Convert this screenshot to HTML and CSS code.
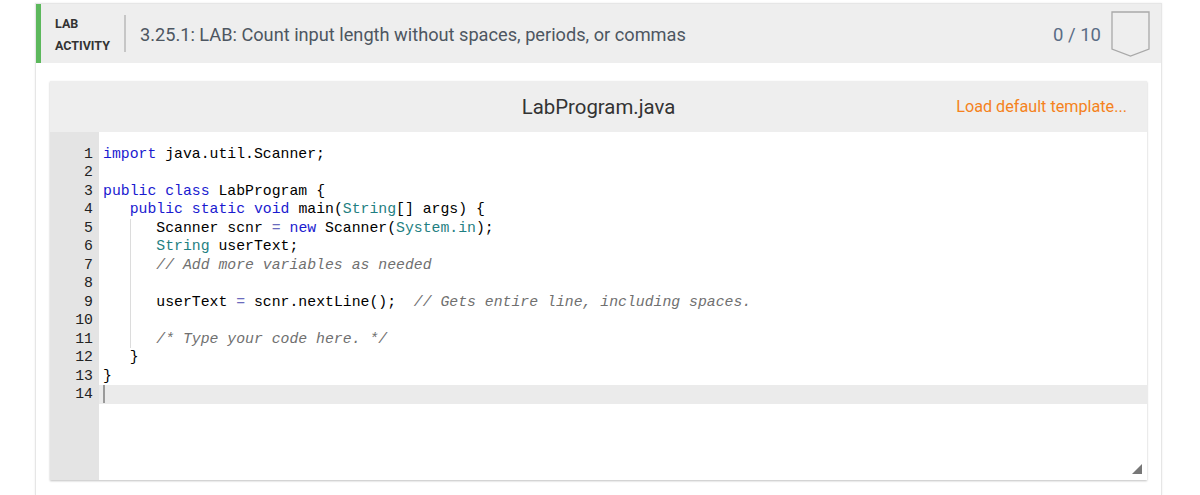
FILE: index.html
```html
<!DOCTYPE html>
<html lang="en">
<head>
    <meta charset="UTF-8">
    <title>LAB ACTIVITY 3.25.1</title>
    <link rel="stylesheet" href="styles.css">
</head>
<body>
    <div class="activity">
        <div class="activity-header">
            <div class="activity-label">LAB<br>ACTIVITY</div>
            <div class="activity-title">3.25.1: LAB: Count input length without spaces, periods, or commas</div>
            <div class="score">0 / 10</div>
            <svg class="badge" width="40" height="48" viewBox="0 0 40 48">
                <path d="M1 1 H38 V38 L19.5 45 L1 38 Z" fill="none" stroke="#a9a9a9" stroke-width="1.3"/>
            </svg>
        </div>

        <div class="activity-body">
            <div class="editor">
                <div class="editor-header">
                    <div class="file-name">LabProgram.java</div>
                    <a class="load-template" href="#">Load default template...</a>
                </div>
                <div class="editor-main">
                    <div class="gutter">
                        <div>1</div><div>2</div><div>3</div><div>4</div><div>5</div>
                        <div>6</div><div>7</div><div>8</div><div>9</div><div>10</div>
                        <div>11</div><div>12</div><div>13</div><div>14</div>
                    </div>
                    <div class="code">
                        <div class="line"><span class="kw">import</span> java.util.Scanner;</div>
                        <div class="line"></div>
                        <div class="line"><span class="kw">public</span> <span class="kw">class</span> LabProgram {</div>
                        <div class="line">   <span class="kw">public</span> <span class="kw">static</span> <span class="kw">void</span> main(<span class="type">String</span>[] args) {</div>
                        <div class="line guide">      Scanner scnr <span class="op">=</span> <span class="kw">new</span> Scanner(<span class="type">System.in</span>);</div>
                        <div class="line guide">      <span class="type">String</span> userText;</div>
                        <div class="line guide">      <span class="cm">// Add more variables as needed</span></div>
                        <div class="line guide"></div>
                        <div class="line guide">      userText <span class="op">=</span> scnr.nextLine();  <span class="cm">// Gets entire line, including spaces.</span></div>
                        <div class="line guide"></div>
                        <div class="line guide">      <span class="cm">/* Type your code here. */</span></div>
                        <div class="line">   }</div>
                        <div class="line">}</div>
                        <div class="line current"><span class="cursor"></span></div>
                    </div>
                    <svg class="resize" width="10" height="10" viewBox="0 0 10 10">
                        <path d="M10 0 L10 10 L0 10 Z" fill="#777"/>
                    </svg>
                </div>
            </div>
        </div>
    </div>
</body>
</html>
```

FILE: styles.css
```css
* {
    box-sizing: border-box;
    margin: 0;
    padding: 0;
}

body {
    background-color: white;
    font-family: Roboto, "Liberation Sans", sans-serif;
    padding: 3px 38px 0 35px;
}

.activity {
    border: 1px solid #e6e6e6;
    border-bottom: none;
    box-shadow: 0 0 2px rgba(0, 0, 0, 0.08);
    height: 492px;
}

.activity-header {
    display: flex;
    align-items: center;
    height: 59px;
    background-color: #eeeeee;
    border-left: 5px solid #5cb85c;
    padding: 0 10px 0 14px;
}

.activity-label {
    font-size: 12.5px;
    font-weight: 700;
    color: #333;
    padding-top: 2px;
    padding-right: 14px;
    border-right: 2px solid #c6c6c6;
    height: 37px;
    display: flex;
    align-items: center;
    line-height: 22px;
}

.activity-title {
    flex: 1;
    font-size: 18.2px;
    color: #4d5661;
    padding-left: 14px;
    padding-top: 2px;
}

.score {
    font-size: 18.5px;
    color: #5a6c85;
    margin-right: 10px;
    padding-top: 2px;
}

.badge {
    display: block;
    margin-top: 3px;
}

.activity-body {
    padding: 18px 14px 0 14px;
}

.editor {
    box-shadow: 0 1px 2px rgba(0, 0, 0, 0.25);
}

.editor-header {
    position: relative;
    height: 51px;
    background-color: #eeeeee;
    display: flex;
    align-items: center;
    justify-content: center;
}

.file-name {
    font-size: 20.4px;
    color: #333;
    padding-top: 1px;
}

.load-template {
    position: absolute;
    right: 20px;
    top: 16px;
    font-size: 16.2px;
    color: #f58220;
    text-decoration: none;
}

.editor-main {
    position: relative;
    display: flex;
    height: 348px;
    background-color: white;
}

.gutter {
    width: 49px;
    background-color: #e4e4e4;
    padding: 12.5px 6px 0 0;
    text-align: right;
    font-family: "Liberation Mono", monospace;
    font-size: 14.8px;
    line-height: 18.5px;
    color: #222;
}

.code {
    flex: 1;
    padding-top: 12.5px;
    font-family: "Liberation Mono", monospace;
    font-size: 14.8px;
    line-height: 18.5px;
    color: #000;
}

.line {
    height: 18.5px;
    padding-left: 4px;
    white-space: pre;
}

.guide {
    background-image: linear-gradient(#dcdcdc, #dcdcdc);
    background-repeat: no-repeat;
    background-position: 31px 0;
    background-size: 1px 100%;
}

.current {
    background-color: #ebebeb;
}

.cursor {
    display: inline-block;
    width: 2px;
    height: 18px;
    background-color: #9a9a9a;
    vertical-align: top;
}

.kw {
    color: #1a1ad0;
}

.type {
    color: #1f7f82;
}

.op {
    color: #6b6bbd;
}

.cm {
    color: #707070;
    font-style: italic;
}

.resize {
    position: absolute;
    right: 5px;
    bottom: 6px;
}
```
